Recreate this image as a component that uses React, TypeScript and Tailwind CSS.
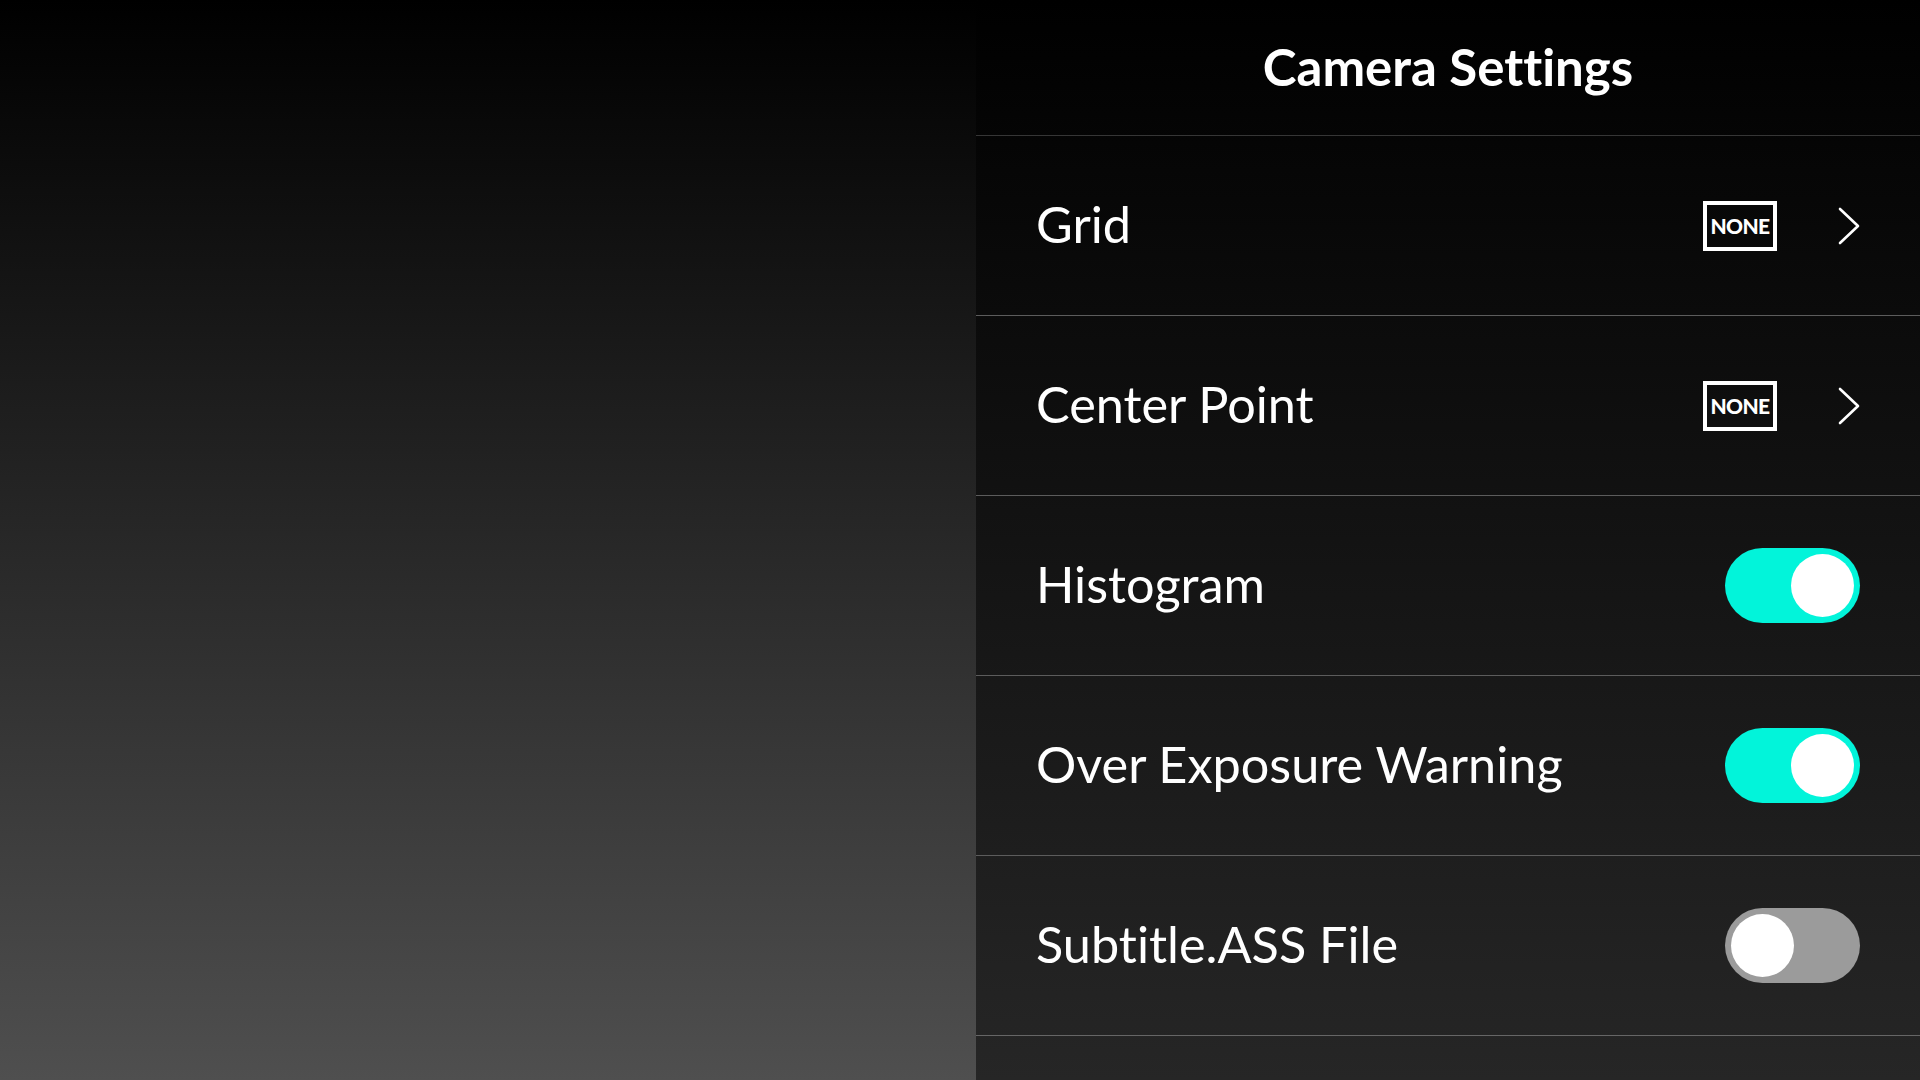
import { useState } from 'react'

type Row =
  | { label: string; kind: 'select'; value: string }
  | { label: string; kind: 'toggle'; on: boolean }

const rows: Row[] = [
  { label: 'Grid', kind: 'select', value: 'NONE' },
  { label: 'Center Point', kind: 'select', value: 'NONE' },
  { label: 'Histogram', kind: 'toggle', on: true },
  { label: 'Over Exposure Warning', kind: 'toggle', on: true },
  { label: 'Subtitle.ASS File', kind: 'toggle', on: false },
]

function Chevron() {
  return (
    <svg width="22" height="38" viewBox="0 0 22 38" fill="none" className="ml-[61px]">
      <path d="M2 2 L20 19 L2 36" stroke="white" strokeWidth="2.6" strokeLinecap="round" strokeLinejoin="round" />
    </svg>
  )
}

function Toggle({ initial }: { initial: boolean }) {
  const [on, setOn] = useState(initial)
  return (
    <button
      onClick={() => setOn(!on)}
      className={`w-[135px] h-[75px] rounded-full p-[6px] flex items-center ${on ? 'bg-[#02f4da] justify-end' : 'bg-[#9b9b9b] justify-start'}`}
    >
      <span className="block w-[63px] h-[63px] rounded-full bg-white" />
    </button>
  )
}

export default function App() {
  return (
    <div
      className="flex w-full h-screen overflow-hidden text-white [font-variant-ligatures:none]"
      style={{ fontFamily: 'Lato, "Noto Sans", sans-serif' }}
    >
      <div className="w-[976px] shrink-0 bg-[linear-gradient(to_bottom,#000000,#4f4f4f)]" />
      <div className="flex-1 flex flex-col bg-[linear-gradient(to_bottom,#000000,#262626)]">
        <div className="h-[135px] shrink-0 flex items-center justify-center">
          <h1 className="text-[51px] font-bold">Camera Settings</h1>
        </div>
        {rows.map((row, i) => (
          <div
            key={row.label}
            className={`h-[180px] shrink-0 border-t flex items-center justify-between pl-[60px] pr-[60px] ${i === 0 ? 'border-[#363636]' : 'border-[#5c5c5c]'}`}
          >
            <span className="text-[50.4px] leading-none -mt-[2px]">{row.label}</span>
            {row.kind === 'select' ? (
              <div className="flex items-center">
                <div className="w-[74px] h-[50px] border-4 border-white flex items-center justify-center text-[21px] font-black tracking-[-0.6px]">
                  {row.value}
                </div>
                <Chevron />
              </div>
            ) : (
              <Toggle initial={row.on} />
            )}
          </div>
        ))}
        <div className="flex-1 border-t border-[#666666]" />
      </div>
    </div>
  )
}
